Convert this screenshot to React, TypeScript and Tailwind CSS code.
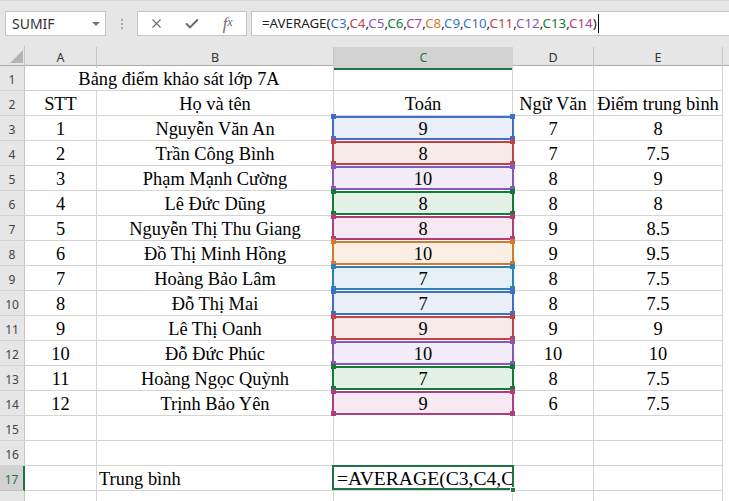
import { Check, X } from "lucide-react";

const GRID = "grid grid-cols-[25px_72px_237px_179px_81px_129px_1fr]";
const LINE = "border-r border-b border-[#d4d4d4]";

const RANGE = [
  { box: "border-[#3f6fc6] bg-[#e9eef8]", dot: "bg-[#3f6fc6]", text: "text-[#3f6fc6]" },
  { box: "border-[#c0424a] bg-[#f9eaea]", dot: "bg-[#c0424a]", text: "text-[#c0424a]" },
  { box: "border-[#8559b7] bg-[#f1ecf7]", dot: "bg-[#8559b7]", text: "text-[#8559b7]" },
  { box: "border-[#137a38] bg-[#e4f1e7]", dot: "bg-[#137a38]", text: "text-[#137a38]" },
  { box: "border-[#ad3f80] bg-[#f6e9f1]", dot: "bg-[#ad3f80]", text: "text-[#ad3f80]" },
  { box: "border-[#d37b2c] bg-[#fbefe5]", dot: "bg-[#d37b2c]", text: "text-[#d37b2c]" },
  { box: "border-[#2e82b3] bg-[#e6f0f7]", dot: "bg-[#2e82b3]", text: "text-[#2e82b3]" },
];

const STUDENTS: [string, number, number, string][] = [
  ["Nguyễn Văn An", 9, 7, "8"],
  ["Trần Công Bình", 8, 7, "7.5"],
  ["Phạm Mạnh Cường", 10, 8, "9"],
  ["Lê Đức Dũng", 8, 8, "8"],
  ["Nguyễn Thị Thu Giang", 8, 9, "8.5"],
  ["Đồ Thị Minh Hồng", 10, 9, "9.5"],
  ["Hoàng Bảo Lâm", 7, 8, "7.5"],
  ["Đỗ Thị Mai", 7, 8, "7.5"],
  ["Lê Thị Oanh", 9, 9, "9"],
  ["Đỗ Đức Phúc", 10, 10, "10"],
  ["Hoàng Ngọc Quỳnh", 7, 8, "7.5"],
  ["Trịnh Bảo Yên", 9, 6, "7.5"],
];

function Toolbar() {
  return (
    <div className="h-[46px] bg-[#e6e6e6] border-t border-[#d6d6d6] flex items-start pt-[10px] pl-[5px]">
      <div className="w-[101px] h-[25px] bg-white border border-[#c6c6c6] flex items-center justify-between pl-[6px] pr-[5px] text-[14px] text-[#333] font-['Noto_Sans',sans-serif]">
        <span>SUMIF</span>
        <span className="w-0 h-0 border-l-[4px] border-r-[4px] border-t-[4px] border-l-transparent border-r-transparent border-t-[#777]" />
      </div>
      <div className="w-[31px] h-[25px] flex flex-col items-center justify-center gap-[2px]">
        <span className="w-[2px] h-[2px] bg-[#a6a6a6]" />
        <span className="w-[2px] h-[2px] bg-[#a6a6a6]" />
        <span className="w-[2px] h-[2px] bg-[#a6a6a6]" />
      </div>
      <div className="w-[110px] h-[25px] bg-white border border-[#c6c6c6] flex items-center text-[#6a6a6a]">
        <div className="w-[37px] flex justify-center"><X size={15} strokeWidth={1.8} /></div>
        <div className="w-[35px] flex justify-center"><Check size={16} strokeWidth={3} /></div>
        <div className="w-[37px] flex justify-center font-['Liberation_Serif',serif] italic text-[16px] leading-none">
          f<span className="text-[12px]">x</span>
        </div>
      </div>
      <div className="ml-[4px] flex-1 h-[25px] bg-white border border-r-0 border-[#c6c6c6] flex items-center pl-[10px] text-[13.3px] font-['Noto_Sans',sans-serif] text-[#222]">
        <Formula />
        <span className="ml-[1px] w-px h-[19px] bg-black" />
      </div>
    </div>
  );
}

function Formula() {
  const refs = Array.from({ length: 12 }, (_, i) => i + 3);
  return (
    <span className="whitespace-nowrap">
      =AVERAGE(
      {refs.map((r, i) => (
        <span key={r}>
          <span className={RANGE[i % 7].text}>C{r}</span>
          {i < refs.length - 1 ? "," : ""}
        </span>
      ))}
      )
    </span>
  );
}

function ColHeader() {
  const cols = ["A", "B", "C", "D", "E"];
  return (
    <div className={`${GRID} h-[20px] bg-[#e6e6e6] border-b border-[#ababab] font-['Noto_Sans',sans-serif] text-[12.5px] text-[#333]`}>
      <div className="relative border-r border-[#c6c6c6]">
        <svg className="absolute left-[10px] top-[4px]" width="13" height="13" viewBox="0 0 13 13">
          <polygon points="13,0 13,13 0,13" fill="#b4b4b4" />
        </svg>
      </div>
      {cols.map((c) => (
        <div
          key={c}
          className={
            c === "C"
              ? "mt-px bg-[#d2d2d2] border-b-2 border-[#217346] -mb-px flex items-center justify-center text-[#217346] pt-[2px]"
              : "flex items-center justify-center my-px border-r border-[#c6c6c6] pt-[2px]"
          }
        >
          {c}
        </div>
      ))}
      <div />
    </div>
  );
}

function RowHead({ n, active }: { n: number; active?: boolean }) {
  return (
    <div
      className={
        active
          ? "bg-[#d2d2d2] border-r-2 border-[#217346] border-b border-b-[#c6c6c6] flex items-center justify-center pt-[3px] text-[#217346] text-[12px] font-['Noto_Sans',sans-serif]"
          : "bg-[#e6e6e6] border-r border-[#c6c6c6] border-b border-b-[#d4d4d4] flex items-center justify-center pt-[3px] text-[#444] text-[12px] font-['Noto_Sans',sans-serif]"
      }
    >
      {n}
    </div>
  );
}

function RangeCell({ idx, children }: { idx: number; children: React.ReactNode }) {
  const c = RANGE[idx % 7];
  return (
    <div className="relative border-r border-b border-r-[#d4d4d4] border-b-white">
      <div className={`absolute -left-[2px] -right-[2px] top-0 bottom-0 border-2 ${c.box} flex items-center justify-center pt-[3px]`}>
        {children}
      </div>
      <span className={`absolute -left-[3px] -top-[2px] w-[5px] h-[5px] ${c.dot}`} />
      <span className={`absolute -right-[3px] -top-[2px] w-[5px] h-[5px] ${c.dot}`} />
      <span className={`absolute -left-[3px] -bottom-[1px] w-[5px] h-[5px] ${c.dot}`} />
      <span className={`absolute -right-[3px] -bottom-[1px] w-[5px] h-[5px] ${c.dot}`} />
    </div>
  );
}

function Cell({ children, left }: { children?: React.ReactNode; left?: boolean }) {
  return (
    <div className={`${LINE} flex items-center pt-[3px] ${left ? "justify-start pl-[2px]" : "justify-center"} whitespace-nowrap`}>
      {children}
    </div>
  );
}

export default function App() {
  return (
    <div className="w-[729px] h-[501px] overflow-hidden bg-white">
      <Toolbar />
      <ColHeader />
      <div className="font-['Liberation_Serif',serif] text-[18.4px] text-black leading-none">
        <div className={`${GRID} h-[25px]`}>
          <RowHead n={1} />
          <div className={`col-span-2 ${LINE} flex items-center justify-center pt-[3px]`}>Bảng điểm khảo sát lớp 7A</div>
          <Cell />
          <Cell />
          <Cell />
          <div />
        </div>
        <div className={`${GRID} h-[25px]`}>
          <RowHead n={2} />
          <Cell>STT</Cell>
          <Cell>Họ và tên</Cell>
          <Cell>Toán</Cell>
          <Cell>Ngữ Văn</Cell>
          <Cell>Điểm trung bình</Cell>
          <div />
        </div>
        {STUDENTS.map(([name, toan, van, tb], i) => (
          <div key={name} className={`${GRID} h-[25px]`}>
            <RowHead n={i + 3} />
            <Cell>{i + 1}</Cell>
            <Cell>{name}</Cell>
            <RangeCell idx={i}>{toan}</RangeCell>
            <Cell>{van}</Cell>
            <Cell>{tb}</Cell>
            <div />
          </div>
        ))}
        {[15, 16].map((n) => (
          <div key={n} className={`${GRID} h-[25px]`}>
            <RowHead n={n} />
            <Cell />
            <Cell />
            <Cell />
            <Cell />
            <Cell />
            <div />
          </div>
        ))}
        <div className={`${GRID} h-[25px]`}>
          <RowHead n={17} active />
          <Cell />
          <Cell left>Trung bình</Cell>
          <div className="relative border-r border-b border-[#d4d4d4]">
            <div className="absolute -left-[2px] -right-[2px] -top-[1px] bottom-0 border-2 border-[#217346] flex items-center pl-[3px] pt-[3px] overflow-hidden whitespace-nowrap text-[19.6px]">
              =AVERAGE(C3,C4,C5,C6
            </div>
            <span className="absolute -right-[4px] -bottom-[3px] w-[6px] h-[6px] bg-[#217346] border border-white" />
          </div>
          <Cell />
          <Cell />
          <div />
        </div>
        <div className={`${GRID} h-[25px]`}>
          <div className="bg-[#e6e6e6] border-r border-[#c6c6c6]" />
          <Cell />
          <Cell />
          <Cell />
          <Cell />
          <Cell />
          <div />
        </div>
      </div>
    </div>
  );
}
